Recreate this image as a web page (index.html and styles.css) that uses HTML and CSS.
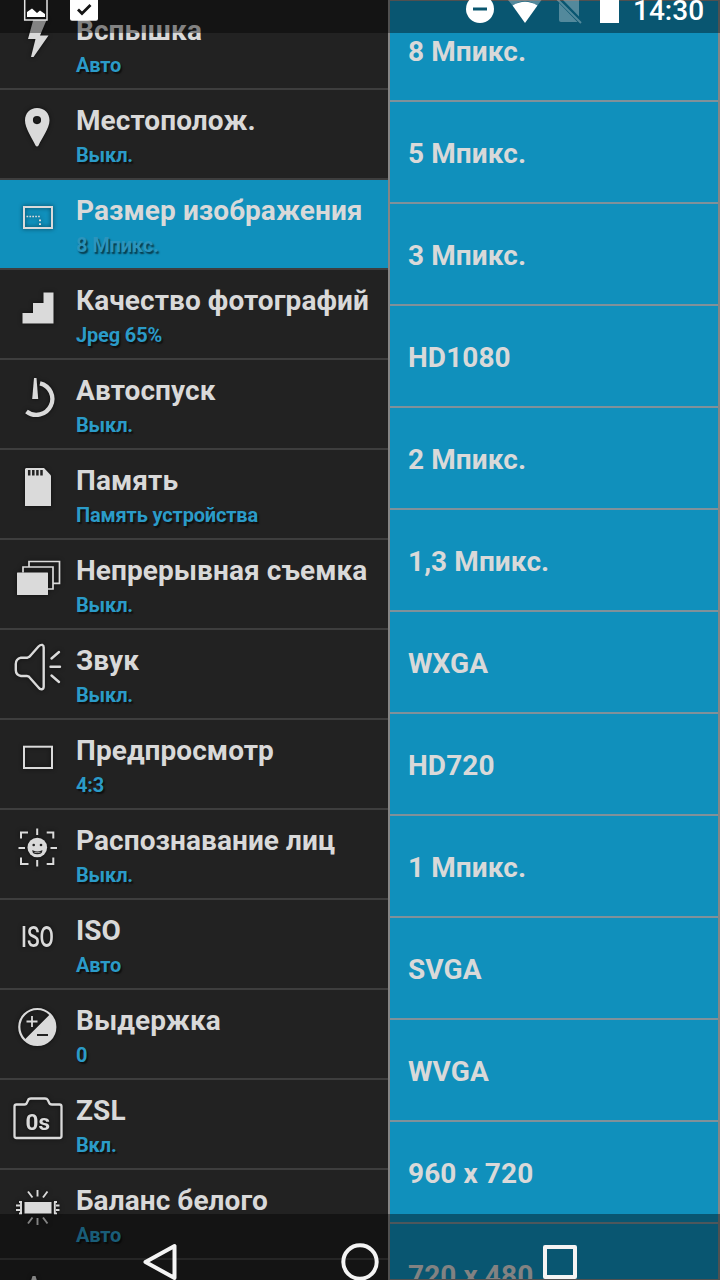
FILE: index.html
```html
<!DOCTYPE html>
<html lang="ru">
<head>
<meta charset="utf-8">
<title>Настройки камеры</title>
<link rel="stylesheet" href="styles.css">
</head>
<body>
<div class="screen">
  <main class="panels">
    <ul class="settings">
      <li class="row">
        <svg class="icon" viewBox="0 0 76 88"><path class="fill" d="M33.500 19H47L40 35.500H48.500L33.500 57H31L35.500 39H28Z"/></svg>
        <div class="labels"><span class="title">Вспышка</span><span class="value">Авто</span></div>
      </li>
      <li class="row">
        <svg class="icon" viewBox="0 0 76 88"><path class="fill" fill-rule="evenodd" d="M37 18C44.500 18 49.500 23 49.500 30.500C49.500 38 42 48 38.500 55.500Q37 57.500 35.500 55.500C32 48 25 38 25 30.500C25 23 30 18 37 18ZM37 26A4 4 0 1 0 37 34.200A4 4 0 1 0 37 26Z"/></svg>
        <div class="labels"><span class="title">Местополож.</span><span class="value">Выкл.</span></div>
      </li>
      <li class="row row-selected">
        <svg class="icon" viewBox="0 0 76 88"><rect class="line" x="24" y="27" width="28" height="21" stroke-width="2"/><path class="line" d="M26.500 36.500H41" stroke-dasharray="1.700 1.200" stroke-width="1.700"/><path class="line" d="M40 39.500V47" stroke-dasharray="1.700 2" stroke-width="2"/></svg>
        <div class="labels"><span class="title">Размер изображения</span><span class="value">8 Мпикс.</span></div>
      </li>
      <li class="row">
        <svg class="icon" viewBox="0 0 76 88"><path class="fill" d="M43.500 22.500H53.500V53.500H22.500V43H33V33H43.500Z"/></svg>
        <div class="labels"><span class="title">Качество фотографий</span><span class="value">Jpeg 65%</span></div>
      </li>
      <li class="row">
        <svg class="icon" viewBox="0 0 76 88"><path class="line" stroke-width="4.300" d="M40 23.300A16 16 0 1 1 26.500 51.500"/><path class="fill" d="M34 18H36.500L38.200 39H32.200Z"/></svg>
        <div class="labels"><span class="title">Автоспуск</span><span class="value">Выкл.</span></div>
      </li>
      <li class="row">
        <svg class="icon" viewBox="0 0 76 88"><path class="fill" d="M26 18H44L51 25.500V56H25V19Z"/><path class="cut" d="M29.200 20V25.500M33.300 20V25.500M37.400 20V25.500M41.500 20V25.500" stroke-width="2.500"/></svg>
        <div class="labels"><span class="title">Память</span><span class="value">Память устройства</span></div>
      </li>
      <li class="row">
        <svg class="icon" viewBox="0 0 76 88"><rect class="fill" x="17" y="32.500" width="31" height="22.500" rx=".5"/><path class="line" stroke-width="1.700" d="M23 32.500V27H53V49H48M29 27V21.500H59.500V43.300H53"/></svg>
        <div class="labels"><span class="title">Непрерывная съемка</span><span class="value">Выкл.</span></div>
      </li>
      <li class="row">
        <svg class="icon" viewBox="0 0 76 88"><path class="line" stroke-width="2.400" stroke-linejoin="round" d="M21 27.700H27.500Q29.500 27 31 25L38.500 16.500Q40.500 14.500 42.500 15Q43.700 15.500 43.700 17.500V56.500Q43.700 59 42 59.200Q40 59.600 38.500 57.500L30.500 48.500Q29 46 27 46H21Q15.800 45 15.800 40V34Q15.800 29 21 27.700Z"/><path class="line round" stroke-width="2.400" d="M51.500 28.500L59 22M50.500 36.700H60M51.500 45.500L59 52"/></svg>
        <div class="labels"><span class="title">Звук</span><span class="value">Выкл.</span></div>
      </li>
      <li class="row">
        <svg class="icon" viewBox="0 0 76 88"><rect class="line" x="24" y="26.700" width="28" height="21.300" stroke-width="2"/></svg>
        <div class="labels"><span class="title">Предпросмотр</span><span class="value">4:3</span></div>
      </li>
      <li class="row">
        <svg class="icon" viewBox="0 0 76 88"><circle class="fill" cx="37.300" cy="37.500" r="9.800"/><circle class="hole" cx="33.700" cy="35" r="1.300"/><circle class="hole" cx="41" cy="35" r="1.300"/><path class="cut" stroke-width="1.200" d="M33 41Q37.300 43 41.700 41Q41.500 43.700 37.300 43.700T33 41Z"/><path class="line" stroke-width="2" d="M21 28.500V22.500H28M46.700 22.500H53.300V28.500M21 47.500V54H28.500M46.700 54H53.300V47.500M37.200 18.500V25M37.200 50V56.500M18.500 38H25M50.500 38H57"/></svg>
        <div class="labels"><span class="title">Распознавание лиц</span><span class="value">Выкл.</span></div>
      </li>
      <li class="row">
        <svg class="icon" viewBox="0 0 76 88"><text class="icon-text medium" x="21" y="47" textLength="33" lengthAdjust="spacingAndGlyphs" font-size="29">ISO</text></svg>
        <div class="labels"><span class="title">ISO</span><span class="value">Авто</span></div>
      </li>
      <li class="row">
        <svg class="icon" viewBox="0 0 76 88"><circle class="line" cx="37.300" cy="37" r="18" stroke-width="2.200"/><path class="fill" d="M50.030 24.270A18 18 0 0 1 24.570 49.730Z"/><path class="line" stroke-width="1.800" d="M26.500 31.500H37.500M32 26V37"/><path class="cut" stroke-width="2" d="M37 45H48"/></svg>
        <div class="labels"><span class="title">Выдержка</span><span class="value">0</span></div>
      </li>
      <li class="row">
        <svg class="icon" viewBox="0 0 76 88"><path class="line" stroke-width="2.300" stroke-linejoin="round" d="M16.500 24.500H24.500Q26.500 24.500 27 22.500L28 20.500Q28.500 18.500 31 18.500H45Q47 18.500 47.800 20L49 22.500Q49.500 24.500 52 24.500H59.500Q61.500 24.500 61.500 26.500V56Q61.500 58 59.500 58H16.500Q14.500 58 14.500 56V26.500Q14.500 24.500 16.500 24.500Z"/><text class="icon-text heavy" x="25.500" y="50" textLength="24.500" lengthAdjust="spacingAndGlyphs" font-size="22">0s</text></svg>
        <div class="labels"><span class="title">ZSL</span><span class="value">Вкл.</span></div>
      </li>
      <li class="row">
        <svg class="icon" viewBox="0 0 76 88"><rect class="fill" x="24.500" y="32" width="27" height="11.500"/><path class="line" stroke-width="1.900" d="M21 32V43.500M54.800 32V43.500M19 32H22M19 43.500H22M54 32H57M54 43.500H57M16 35.500H20M16 40H20M56 35.500H59.500M56 40H59.500M37.500 20V26.500M28 21.500L32.500 27.500M47.500 21.500L43 27.500M37.500 48V55M32.500 47.500L28 53.500M43 47.500L47.500 53.500"/></svg>
        <div class="labels"><span class="title">Баланс белого</span><span class="value">Авто</span></div>
      </li>
      <li class="row">
        <svg class="icon" viewBox="0 0 76 88"><path class="fill" d="M32.500 16H35.500L38 24H30Z"/></svg>
      </li>
    </ul>
    <ul class="sizes">
      <li class="size">8 Мпикс.</li>
      <li class="size">5 Мпикс.</li>
      <li class="size">3 Мпикс.</li>
      <li class="size">HD1080</li>
      <li class="size">2 Мпикс.</li>
      <li class="size">1,3 Мпикс.</li>
      <li class="size">WXGA</li>
      <li class="size">HD720</li>
      <li class="size">1 Мпикс.</li>
      <li class="size">SVGA</li>
      <li class="size">WVGA</li>
      <li class="size">960 x 720</li>
      <li class="size">720 x 480</li>
    </ul>
  </main>
  <header class="status-bar">
    <svg class="status-icons" viewBox="0 0 720 33">
      <rect class="gallery" x="24.700" y="-4" width="22.300" height="24"/>
      <path class="white" d="M27 17V12L32 8.500L37 13L40 10.500L45 14V17Z"/>
      <rect class="white" x="70" y="-8" width="28" height="28.700" rx="2"/>
      <path class="check" d="M78 9.500L82 13.500L90.500 5"/>
      <circle class="white" cx="480" cy="9" r="14"/>
      <path class="minus" d="M473 9H487"/>
      <path class="dim" d="M508 0H541.500L537.500 5.500Q525 -3 512.500 5.500Z"/>
      <path class="white" d="M512.500 5.500Q525 -2 537.500 5.500L525 23Z"/>
      <path class="dim" d="M563 0H579V16.500L563 0ZM559 3L577.500 22H561Q559 22 559 20Z"/>
      <path class="dim-line" d="M557 -1L581 23"/>
      <rect class="white" x="600" y="-2" width="19" height="25"/>
    </svg>
    <time class="clock">14:30</time>
  </header>
  <nav class="nav-bar">
    <svg class="nav-icons" viewBox="0 0 720 66">
      <path class="nav-line" d="M174.500 32V64L145.500 48Z"/>
      <circle class="nav-line" cx="360" cy="48" r="16.700"/>
      <rect class="nav-line" x="545" y="33" width="30" height="30"/>
    </svg>
  </nav>
</div>
</body>
</html>
```

FILE: styles.css
```css
* { box-sizing: border-box; }
body { margin: 0; background: #222; font-family: Roboto, "Open Sans", sans-serif; }
ul { margin: 0; padding: 0; list-style: none; }
.screen { position: relative; width: 720px; height: 1280px; overflow: hidden; }
.panels { display: flex; height: 1280px; }
.settings { width: 388px; height: 1280px; overflow: hidden; background: #222; }
.row { display: flex; height: 90px; border-bottom: 2px solid #3e3e3e; }
.row-selected { background: #1090bc; }
.icon { flex: none; width: 76px; height: 88px; filter: drop-shadow(0 0 2px rgba(0, 0, 0, .6)); }
.labels { display: flex; flex-direction: column; padding-top: 14px; font-weight: 700; white-space: nowrap; }
.title { font-size: 28px; line-height: 33px; letter-spacing: .08px; color: #d9d9d9; }
.value { font-size: 20px; line-height: 24px; margin-top: 6px; letter-spacing: -.15px; color: #2b9bc8; text-shadow: 1.500px 1.500px 1.500px rgba(0, 0, 0, .6); }
.row-selected .value { color: #2b94bd; }
.fill, .icon-text { fill: #dadada; }
.line { fill: none; stroke: #dadada; }
.round { stroke-linecap: round; }
.cut { fill: none; stroke: #222; }
.hole { fill: #222; }
.icon-text { font-family: Roboto, sans-serif; }
.medium { font-weight: 500; }
.heavy { font-weight: 700; }
.sizes { width: 332px; height: 1280px; overflow: hidden; background: #1090bc; border: 1px solid #858585; border-left-width: 2px; border-right-width: 2px; }
.size { display: flex; align-items: center; height: 102px; padding: 2px 0 0 18px; border-bottom: 2px solid #80919a; font-size: 28px; font-weight: 700; letter-spacing: .08px; color: #d9d9d9; }
.size:first-child { height: 101px; }
.status-bar, .nav-bar { position: absolute; left: 0; width: 720px; background: rgba(0, 0, 0, .4); overflow: hidden; }
.status-bar { top: 0; height: 33px; }
.nav-bar { bottom: 0; height: 66px; }
.status-icons, .nav-icons { display: block; width: 100%; height: 100%; }
.white { fill: #fff; }
.gallery { fill: #141414; stroke: #e5e5e5; stroke-width: 1.5px; }
.check { fill: none; stroke: #141414; stroke-width: 2.800px; }
.minus { fill: none; stroke: #0a566f; stroke-width: 3px; }
.dim { fill: rgba(255, 255, 255, .3); }
.dim-line { stroke: rgba(255, 255, 255, .3); stroke-width: 2px; }
.clock { position: absolute; top: -6px; left: 633px; font-size: 28px; line-height: 33px; font-weight: 500; color: #fff; }
.nav-line { fill: none; stroke: #f4f4f4; stroke-width: 4px; stroke-linejoin: round; }
```
